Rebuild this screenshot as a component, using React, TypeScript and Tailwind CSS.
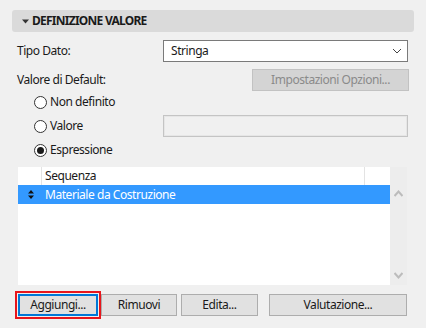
import React from "react";

const font = { fontFamily: '"Noto Sans", "Open Sans", sans-serif' };

const Radio = ({ checked, label }: { checked?: boolean; label: string }) => (
    <div className="flex items-center">
        <span className="w-[13px] h-[13px] rounded-full border border-[#333333] bg-white flex items-center justify-center">
            {checked && <span className="w-[7px] h-[7px] rounded-full bg-[#1a1a1a]" />}
        </span>
        <span className="ml-[3px] text-[12px] text-[#1a1a1a]">{label}</span>
    </div>
);

const Btn = ({ w, children }: { w: string; children: React.ReactNode }) => (
    <button className={`${w} h-[22px] bg-[#e1e1e1] border border-[#adadad] text-[12px] text-[#1a1a1a] flex items-center justify-center`}>
        {children}
    </button>
);

export default function App() {
    return (
        <div className="w-[426px] h-[328px] bg-[#f0f0f0] pt-[10px] overflow-hidden tracking-[-0.45px]" style={font}>
            {/* Section header */}
            <div className="mx-[12px] h-[22px] rounded-[3px] bg-[#dadada] flex items-center pl-[10px]">
                <svg width="7" height="5" viewBox="0 0 7 5" className="mr-[3px]">
                    <path d="M0 0.5 L7 0.5 L3.5 4.5 Z" fill="#333333" />
                </svg>
                <span className="text-[12px] font-bold text-[#1a1a1a] tracking-[-0.75px]">DEFINIZIONE VALORE</span>
            </div>

            <div className="pl-[17px] pr-[18px]">
                {/* Tipo Dato */}
                <div className="mt-[8px] h-[22px] flex items-center">
                    <span className="w-[146px] text-[12px] text-[#1a1a1a]">Tipo Dato:</span>
                    <div className="flex-1 h-full bg-white border border-[#7a7a7a] flex items-center justify-between pl-[7px] pr-[5px]">
                        <span className="text-[12px] text-[#1a1a1a]">Stringa</span>
                        <svg width="10" height="6" viewBox="0 0 10 6">
                            <path d="M1 1 L5 5 L9 1" fill="none" stroke="#444444" strokeWidth="1" />
                        </svg>
                    </div>
                </div>

                {/* Valore di Default */}
                <div className="mt-[7px] h-[22px] flex items-center justify-between">
                    <span className="text-[12px] text-[#1a1a1a]">Valore di Default:</span>
                    <div className="w-[157px] h-full mr-[-1px] bg-[#d4d4d4] border border-[#c2c2c2] flex items-center justify-center text-[12px] text-[#8a8a8a]">
                        Impostazioni Opzioni...
                    </div>
                </div>

                {/* Radios */}
                <div className="pl-[17px]">
                    <div className="mt-[1px] h-[20px] flex items-center">
                        <Radio label="Non definito" />
                    </div>
                    <div className="mt-[3px] h-[22px] flex items-center">
                        <div className="w-[129px]">
                            <Radio label="Valore" />
                        </div>
                        <div className="flex-1 h-full border border-[#c4c4c4] bg-[#f0f0f0] shadow-[inset_0_0_0_1px_#e6e6e6]" />
                    </div>
                    <div className="mt-[3px] h-[20px] flex items-center">
                        <Radio checked label="Espressione" />
                    </div>
                </div>

                {/* Table */}
                <div className="mt-[7px] ml-[1px] mr-[1px] h-[118px] flex">
                    <div className="flex-1 bg-white flex flex-col">
                        <div className="h-[18px] flex">
                            <div className="w-[24px] border-r border-[#e3e3e3]" />
                            <div className="flex-1 pl-[3px] text-[12px] text-[#1a1a1a] leading-[18px] border-r border-[#e3e3e3]">Sequenza</div>
                            <div className="w-[25px]" />
                        </div>
                        <div className="h-[19px] bg-[#3399ff] flex items-center">
                            <div className="w-[24px] flex justify-center pl-[1px]">
                                <svg width="6" height="9" viewBox="0 0 6 9">
                                    <path d="M0 3.5 L3 0 L6 3.5 Z M0 5.5 L3 9 L6 5.5 Z" fill="#111111" />
                                </svg>
                            </div>
                            <span className="pl-[3px] text-[12px] text-white">Materiale da Costruzione</span>
                        </div>
                    </div>
                    <div className="w-[17px] bg-[#ededed] flex flex-col items-center justify-between py-[6px]">
                        <svg width="9" height="7" viewBox="0 0 9 7" className="mt-[17px]">
                            <path d="M0.5 6 L4.5 1.5 L8.5 6" fill="none" stroke="#bcbcbc" strokeWidth="2" />
                        </svg>
                        <svg width="9" height="7" viewBox="0 0 9 7">
                            <path d="M0.5 1 L4.5 5.5 L8.5 1" fill="none" stroke="#bcbcbc" strokeWidth="2" />
                        </svg>
                    </div>
                </div>

                {/* Buttons */}
                <div className="mt-[9px] flex items-center">
                    <button className="ml-[1px] w-[80px] h-[22px] bg-[#e1e1e1] border-2 border-[#0078d7] outline-2 outline-[#e8161c] outline-offset-[1px] text-[12px] text-[#1a1a1a] flex items-center justify-center">
                        Aggiungi...
                    </button>
                    <div className="ml-[3px]">
                        <Btn w="w-[76px]">Rimuovi</Btn>
                    </div>
                    <div className="ml-[4px]">
                        <Btn w="w-[77px]">Edita...</Btn>
                    </div>
                    <div className="ml-[11px]">
                        <Btn w="w-[138px]">Valutazione...</Btn>
                    </div>
                </div>
            </div>
        </div>
    );
}
